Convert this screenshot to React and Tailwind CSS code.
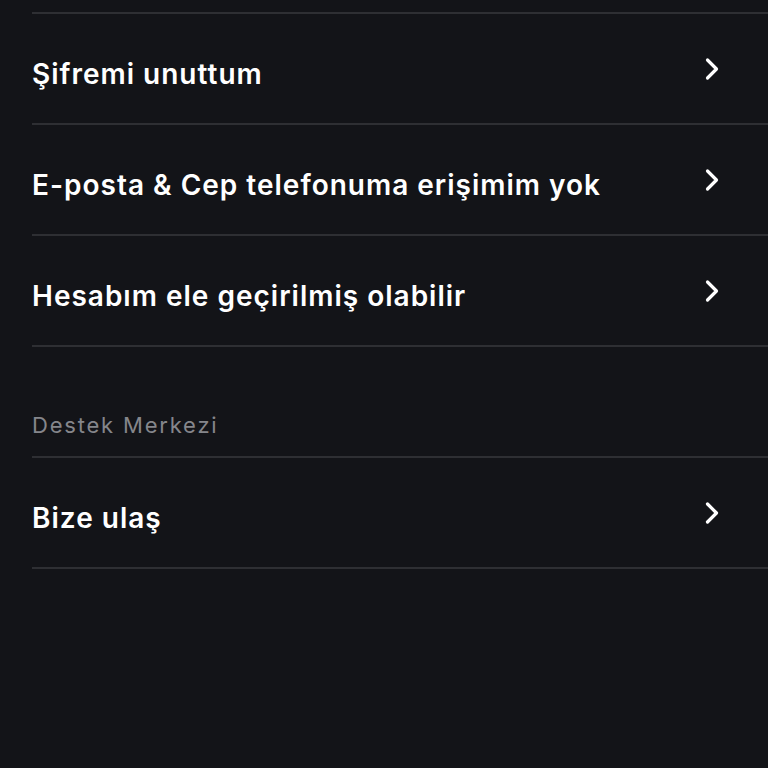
import React from 'react';

const rows = [
  { label: 'Şifremi unuttum' },
  { label: 'E-posta & Cep telefonuma erişimim yok' },
  { label: 'Hesabım ele geçirilmiş olabilir' },
];

const Chevron = () => (
  <svg width="16" height="24" viewBox="0 0 16 24" fill="none" className="shrink-0">
    <path d="M3.5 3 L12.5 12 L3.5 21" stroke="white" strokeWidth="3.2" strokeLinecap="round" strokeLinejoin="round" />
  </svg>
);

const Row = ({ label }) => (
  <div className="flex h-[111px] items-center justify-between border-b-[2px] border-[#2e2f33] pr-[48px]">
    <span className="translate-y-[5px] text-[28px] font-semibold tracking-[1px] text-white">{label}</span>
    <Chevron />
  </div>
);

export default function App() {
  return (
    <div
      className="min-h-[768px] w-full bg-[#131418] pl-8"
      style={{ fontFamily: 'Inter, "Noto Sans", sans-serif' }}
    >
      <div className="h-[14px] border-b-[2px] border-[#2e2f33]" />
      {rows.map((r) => (
        <Row key={r.label} label={r.label} />
      ))}
      <div className="flex h-[111px] items-end border-b-[2px] border-[#2e2f33] pb-[14px]">
        <span className="text-[22px] tracking-[1.8px] text-[#85868b]">Destek Merkezi</span>
      </div>
      <Row label="Bize ulaş" />
    </div>
  );
}
